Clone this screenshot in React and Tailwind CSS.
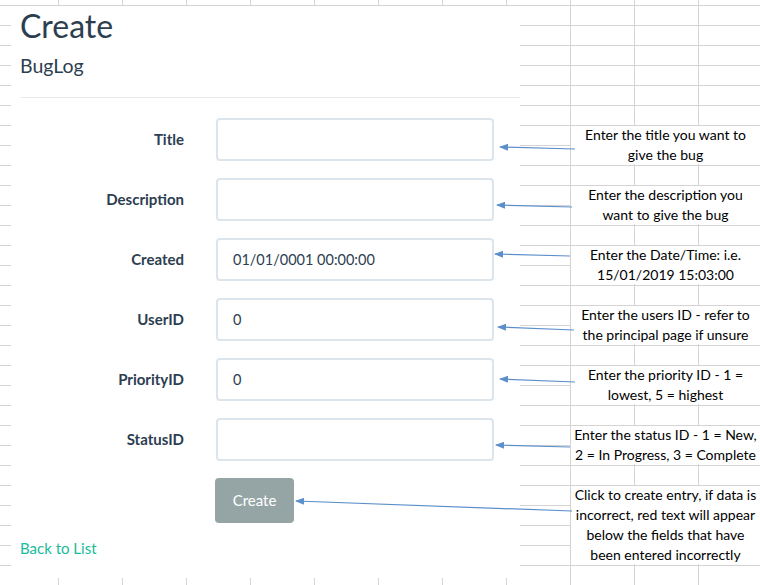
import React from "react";

const fields = [
  { label: "Title", value: "" },
  { label: "Description", value: "" },
  { label: "Created", value: "01/01/0001 00:00:00" },
  { label: "UserID", value: "0" },
  { label: "PriorityID", value: "0" },
  { label: "StatusID", value: "" },
];

const notes = [
  ["Enter the title you want to", "give the bug"],
  ["Enter the description you", "want to give the bug"],
  ["Enter the Date/Time: i.e.", "15/01/2019 15:03:00"],
  ["Enter the users ID - refer to", "the principal page if unsure"],
  ["Enter the priority ID - 1 =", "lowest, 5 = highest"],
  ["Enter the status ID - 1 = New,", "2 = In Progress, 3 = Complete"],
];

const lastNote = [
  "Click to create entry, if data is",
  "incorrect, red text will appear",
  "below the fields that have",
  "been entered incorrectly",
];

// tail (note side) -> head (form side)
const arrows = [
  [575, 149, 500, 147],
  [572, 207, 497, 205],
  [570, 256, 495, 254],
  [574, 330, 498, 327],
  [575, 382, 500, 379],
  [570, 447, 496, 445],
  [572, 511, 296, 501],
];

export default function App() {
  return (
    <div className="relative w-[760px] h-[585px] overflow-hidden bg-white bg-[linear-gradient(to_right,#d4d4d4_1px,transparent_1px),linear-gradient(to_bottom,#d4d4d4_1px,transparent_1px)] bg-[size:64px_20px] bg-[position:58px_5px]">
      <div className="flex items-start">
        {/* Form page */}
        <div className="ml-[11px] mt-[6px] w-[509px] h-[572px] bg-white pl-[9px] font-['Lato',sans-serif] text-[#2c3e50]">
          <h1 className="mt-[3.5px] text-[32px] leading-none font-normal">Create</h1>
          <h4 className="mt-[14px] text-[19.5px] leading-none font-normal">BugLog</h4>
          <hr className="mt-[22px] border-0 border-t border-[#eaeaea]" />

          <div className="mt-[20px] flex flex-col gap-[17px]">
            {fields.map((f) => (
              <div key={f.label} className="flex items-center gap-[32px]">
                <label className="w-[164px] text-right text-[15px] font-bold">
                  {f.label}
                </label>
                <div className="w-[278px] h-[43px] border-2 border-[#dce4ec] rounded-[4px] flex items-center pl-[15px] text-[14.5px]">
                  {f.value}
                </div>
              </div>
            ))}
          </div>

          <div className="mt-[17px] ml-[195px]">
            <button className="w-[79px] h-[45px] rounded-[4px] bg-[#95a5a6] text-white text-[15px]">
              Create
            </button>
          </div>

          <div className="mt-[15px] text-[15px] leading-[20px] text-[#18bc9c]">
            Back to List
          </div>
        </div>

        {/* Spreadsheet notes */}
        <div className="ml-[51px] pt-[126px] flex flex-col gap-[22px] font-['Lato',sans-serif] text-[14px] leading-[20px] text-black">
          {notes.map((n) => (
            <div key={n[0]} className="w-[189px] h-[38px] bg-white flex flex-col items-center justify-center">
              {n.map((line) => (
                <span key={line} className="whitespace-nowrap">{line}</span>
              ))}
            </div>
          ))}
          <div className="w-[189px] h-[78px] bg-white flex flex-col items-center justify-center">
            {lastNote.map((line) => (
              <span key={line} className="whitespace-nowrap">{line}</span>
            ))}
          </div>
        </div>
      </div>

      <svg className="absolute inset-0 pointer-events-none" width="760" height="585">
        <defs>
          <marker id="head" markerUnits="userSpaceOnUse" markerWidth="9" markerHeight="7" refX="8" refY="3.5" orient="auto">
            <path d="M0,0 L9,3.5 L0,7 z" fill="#5b8fcb" />
          </marker>
        </defs>
        {arrows.map(([x1, y1, x2, y2], i) => (
          <line key={i} x1={x1} y1={y1} x2={x2} y2={y2} stroke="#5b8fcb" strokeWidth="1.25" markerEnd="url(#head)" />
        ))}
      </svg>
    </div>
  );
}
